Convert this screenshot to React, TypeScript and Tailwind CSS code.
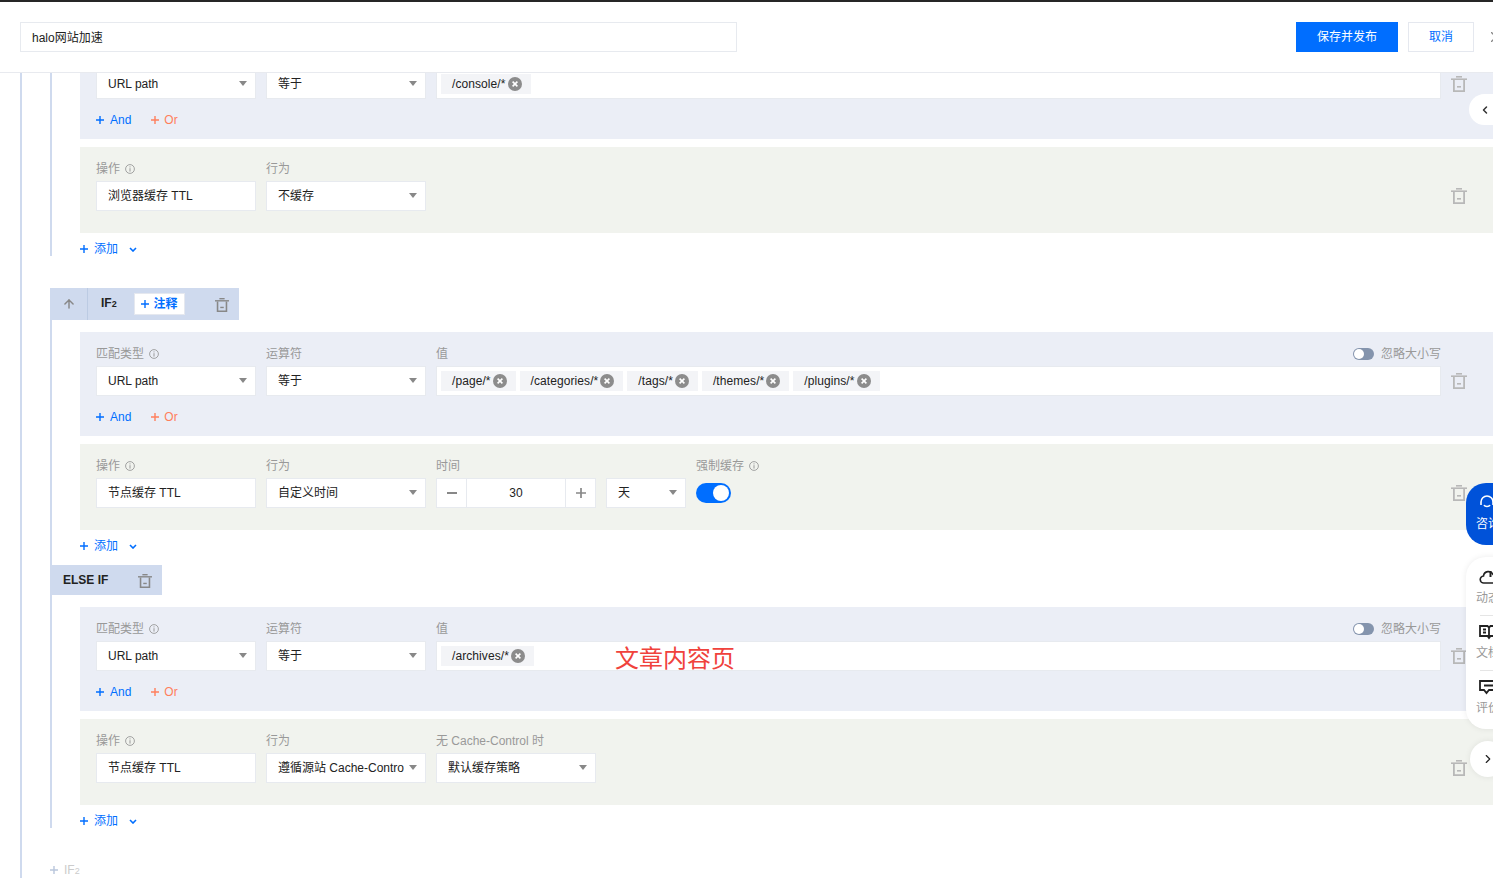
import React from 'react'
import { ArrowUp, ChevronLeft, ChevronRight } from 'lucide-react'

const FONT = { fontFamily: '"Liberation Sans", "Noto Sans CJK SC", sans-serif' }

const TrashIcon = ({ className = 'text-[#b8b8b8]', size = 16 }: { className?: string; size?: number }) => (
  <svg width={size} height={size} viewBox="0 0 16 16" className={className} fill="currentColor">
    <rect x="5" y="0" width="6" height="1.6" />
    <rect x="0" y="2.4" width="16" height="1.6" />
    <path d="M2 4h1.8v10.2h8.4V4H14v12H2z" />
    <rect x="6" y="10" width="4" height="1.6" />
  </svg>
)

const InfoIcon = () => (
  <svg width="10" height="10" viewBox="0 0 10 10" className="ml-[5px] text-[#999]" fill="none" stroke="currentColor">
    <circle cx="5" cy="5" r="4.4" strokeWidth="0.9" />
    <path d="M5 2.4v1M5 4.2v3.4" strokeWidth="1" />
  </svg>
)

const PlusIcon = ({ className = '' }: { className?: string }) => (
  <svg width="8" height="8" viewBox="0 0 8 8" className={className} stroke="currentColor" strokeWidth="1.4">
    <path d="M0 4h8M4 0v8" />
  </svg>
)

const Caret = () => (
  <svg width="8" height="5" viewBox="0 0 8 5" className="absolute right-[8px] top-[11px] text-[#888]" fill="currentColor">
    <path d="M0 0h8L4 5z" />
  </svg>
)

const Box = ({ children, className = '' }: { children?: React.ReactNode; className?: string }) => (
  <div className={`flex h-[30px] items-center border border-[#e7eaef] bg-white text-[12px] text-[#222] ${className}`}>
    {children}
  </div>
)

const Select = ({ text, w = 'w-[160px]' }: { text: string; w?: string }) => (
  <Box className={`relative pl-[11px] pr-[21px] ${w}`}>
    <span className="overflow-hidden whitespace-nowrap">{text}</span>
    <Caret />
  </Box>
)

const Field = ({ label, info, right, children, className = '' }: {
  label?: string
  info?: boolean
  right?: React.ReactNode
  children: React.ReactNode
  className?: string
}) => (
  <div className={className}>
    <div className="mb-[4px] flex h-[18px] items-center pt-[2px] text-[12px] text-[#999]">
      {label}
      {info && <InfoIcon />}
      {right}
    </div>
    {children}
  </div>
)

const Tag = ({ text }: { text: string }) => (
  <span className="flex h-[20px] items-center bg-[#f3f4f7] pl-[11px] pr-[2px] text-[12px] tracking-[0.08px] text-[#222]">
    {text}
    <svg width="14" height="14" viewBox="0 0 14 14" className="ml-[2px] mr-[7px]">
      <circle cx="7" cy="7" r="7" fill="#8c8c8c" />
      <path d="M4.6 4.6l4.8 4.8M9.4 4.6l-4.8 4.8" stroke="#fff" strokeWidth="1.6" />
    </svg>
  </span>
)

const Trash = () => (
  <div className="flex h-[30px] w-[52px] shrink-0 items-center self-end pl-[10px]">
    <TrashIcon />
  </div>
)

const IgnoreCase = () => (
  <div className="ml-auto flex items-center text-[#999]">
    <span className="mr-[7px] flex h-[12px] w-[21px] items-center rounded-full bg-[#8494ad] pl-[1px]">
      <span className="h-[10px] w-[10px] rounded-full bg-white" />
    </span>
    忽略大小写
  </div>
)

const Condition = ({ tags }: { tags: string[] }) => (
  <div className="bg-[#ebeef6] pb-[9px] pl-[16px] pt-[12px]">
    <div className="flex">
      <div className="flex flex-1 gap-[10px]">
        <Field label="匹配类型" info className="w-[160px]"><Select text="URL path" /></Field>
        <Field label="运算符" className="w-[160px]"><Select text="等于" /></Field>
        <Field label="值" right={<IgnoreCase />} className="flex-1">
          <Box className="gap-[4px] pl-[4px]">
            {tags.map(t => <Tag key={t} text={t} />)}
          </Box>
        </Field>
      </div>
      <Trash />
    </div>
    <div className="mt-[11px] flex h-[20px] items-center text-[12px]">
      <PlusIcon className="text-[#006eff]" />
      <span className="ml-[6px] text-[#006eff]">And</span>
      <PlusIcon className="ml-[20px] text-[#ff7f5c]" />
      <span className="ml-[5px] text-[#ff7f5c]">Or</span>
    </div>
  </div>
)

const Action = ({ children }: { children: React.ReactNode }) => (
  <div className="mt-[8px] flex bg-[#f1f3ee] pb-[22px] pl-[16px] pt-[12px]">
    <div className="flex flex-1 gap-[10px]">{children}</div>
    <Trash />
  </div>
)

const AddRow = () => (
  <div className="mt-[8px] flex h-[16px] items-center text-[12px] text-[#006eff]">
    <PlusIcon />
    <span className="ml-[6px]">添加</span>
    <svg width="8" height="5" viewBox="0 0 8 5" className="ml-[11px]" fill="none" stroke="currentColor" strokeWidth="1.6">
      <path d="M1 1l3 3 3-3" />
    </svg>
  </div>
)

const Stepper = () => (
  <Box className="w-[160px]">
    <span className="flex h-full w-[29px] items-center justify-center text-[#888]">
      <svg width="10" height="2" viewBox="0 0 10 2" fill="currentColor"><rect width="10" height="2" /></svg>
    </span>
    <span className="flex h-full flex-1 items-center justify-center border-x border-[#e7eaef]">30</span>
    <span className="flex h-full w-[29px] items-center justify-center text-[#888]">
      <svg width="10" height="10" viewBox="0 0 10 10" stroke="currentColor" strokeWidth="1.7"><path d="M0 5h10M5 0v10" /></svg>
    </span>
  </Box>
)

const SideItem = ({ icon, label, className = 'h-[54px] pt-[9px]' }: { icon: React.ReactNode; label: string; className?: string }) => (
  <div className={`flex flex-col ${className}`}>
    <div className="h-[18px] pl-[13px]">{icon}</div>
    <span className="mt-[2px] pl-[10px] text-[12px] leading-[16px] text-[#999]">{label}</span>
  </div>
)

export default function App() {
  return (
    <div style={FONT} className="relative flex h-[891px] w-[1493px] flex-col overflow-hidden bg-white">
      <div className="h-[2px] bg-[#262626]" />
      <header className="z-10 flex h-[71px] shrink-0 items-center overflow-hidden border-b border-[#e8eaef] bg-white pl-[20px]">
        <div className="flex h-[30px] w-[717px] shrink-0 items-center border border-[#e7eaef] pl-[11px] pt-[2px] text-[12px] text-[#222]">halo网站加速</div>
        <button className="ml-[559px] h-[30px] w-[102px] shrink-0 bg-[#006eff] text-[12px] text-white">保存并发布</button>
        <button className="ml-[10px] h-[30px] w-[66px] shrink-0 border border-[#e5e8ef] text-[12px] text-[#006eff]">取消</button>
        <svg width="10" height="10" viewBox="0 0 10 10" className="ml-[17px] shrink-0 text-[#888]" stroke="currentColor" strokeWidth="1.4">
          <path d="M0 0l10 10M10 0L0 10" />
        </svg>
      </header>

      <main className="flex-1 overflow-hidden pl-[20px]">
        <div className="-mt-[38px] h-[843px] border-l-2 border-[#cfdaee] pl-[28px]">
          <div className="h-[221px] border-l-2 border-[#cfdaee] pl-[28px]">
            <Condition tags={['/console/*']} />
            <Action>
              <Field label="操作" info className="w-[160px]"><Box className="pl-[11px]">浏览器缓存 TTL</Box></Field>
              <Field label="行为" className="w-[160px]"><Select text="不缓存" /></Field>
            </Action>
            <AddRow />
          </div>

          <div className="mt-[32px] flex h-[32px] w-[189px] items-center bg-[#cfdaee]">
            <div className="flex h-full w-[38px] items-center justify-center border-r border-[#bccbe3] text-[#888]">
              <ArrowUp size={14} strokeWidth={2.5} />
            </div>
            <span className="-mt-[2px] ml-[13px] w-[33px] text-[12px] font-bold text-[#222]">IF<span className="text-[9px]">2</span></span>
            <button className="flex h-[22px] w-[51px] items-center justify-center border border-[#e5e8ef] bg-white text-[12px] font-bold text-[#006eff]">
              <PlusIcon className="mr-[4px]" />注释
            </button>
            <span className="ml-[30px] mt-[2px]"><TrashIcon size={14} className="text-[#888]" /></span>
          </div>

          <div className="h-[508px] border-l-2 border-[#cfdaee] pl-[28px] pt-[12px]">
            <Condition tags={['/page/*', '/categories/*', '/tags/*', '/themes/*', '/plugins/*']} />
            <Action>
              <Field label="操作" info className="w-[160px]"><Box className="pl-[11px]">节点缓存 TTL</Box></Field>
              <Field label="行为" className="w-[160px]"><Select text="自定义时间" /></Field>
              <Field label="时间"><Stepper /></Field>
              <Field><Select text="天" w="w-[80px]" /></Field>
              <Field label="强制缓存" info>
                <div className="flex h-[30px] items-center">
                  <span className="flex h-[20px] w-[35px] items-center justify-end rounded-full bg-[#006eff] pr-[2px]">
                    <span className="h-[16px] w-[16px] rounded-full bg-white" />
                  </span>
                </div>
              </Field>
            </Action>
            <AddRow />

            <div className="-ml-[28px] mt-[11px] flex h-[30px] w-[110px] items-center bg-[#cfdaee] pl-[11px] text-[12px] font-bold text-[#222]">
              ELSE IF
              <span className="ml-auto mr-[10px] mt-[2px]"><TrashIcon size={14} className="text-[#888]" /></span>
            </div>

            <div className="mt-[12px]"><Condition tags={['/archives/*']} /></div>
            <Action>
              <Field label="操作" info className="w-[160px]"><Box className="pl-[11px]">节点缓存 TTL</Box></Field>
              <Field label="行为" className="w-[160px]"><Select text="遵循源站 Cache-Control" /></Field>
              <Field label="无 Cache-Control 时" className="w-[160px]"><Select text="默认缓存策略" /></Field>
            </Action>
            <AddRow />
          </div>

          <div className="mt-[34px] flex h-[16px] items-center text-[12px] text-[#ccc]">
            <PlusIcon className="text-[#b9c6dc]" />
            <span className="ml-[6px]">IF<span className="text-[9px]">2</span></span>
          </div>
        </div>
      </main>

      <div className="absolute left-[615px] top-[643px] text-[24px] leading-[32px] text-[#f0423c]">文章内容页</div>

      <div className="absolute left-[1469px] top-[94px] flex h-[31px] w-[40px] items-center rounded-l-full bg-white pl-[10px] text-[#333]">
        <ChevronLeft size={12} strokeWidth={3} />
      </div>

      <div className="absolute left-[1466px] top-[483px] h-[62px] w-[50px] rounded-l-[20px] bg-[#0052d9] pl-[10px] pt-[12px] text-white">
        <svg width="16" height="16" viewBox="0 0 16 16" className="ml-[3px]" fill="none" stroke="currentColor" strokeWidth="1.6">
          <path d="M2 10V7a6 6 0 0 1 12 0v3M5 10c1 2 5 2 6 0" />
        </svg>
        <span className="mt-[5px] block text-[12px] leading-[16px]">咨询</span>
      </div>

      <div className="absolute left-[1466px] top-[557px] h-[172px] w-[50px] rounded-l-[20px] bg-white shadow-[0_0_6px_rgba(0,0,0,0.08)]">
        <SideItem label="动态" className="h-[58px] pt-[13px]" icon={
          <svg width="20" height="18" viewBox="0 0 20 18" fill="none" stroke="#222" strokeWidth="1.6">
            <path d="M5 13a3.5 3.5 0 0 1-.5-7A5 5 0 0 1 14 4.5a4.5 4.5 0 0 1 2 8.5z" />
            <path d="M11.5 1v6" strokeWidth="2" />
          </svg>
        } />
        <div className="ml-[14px] h-px bg-[#e5e5e5]" />
        <SideItem label="文档" icon={
          <svg width="20" height="18" viewBox="0 0 20 18" fill="none" stroke="#222" strokeWidth="1.8">
            <path d="M1 1h7.5L10 2.5 11.5 1H19v10h-7.5L10 13l-1.5-2H1zM10 2.5V13M4 4.5h3M4 7.5h3" />
          </svg>
        } />
        <div className="ml-[14px] h-px bg-[#e5e5e5]" />
        <SideItem label="评价" icon={
          <svg width="20" height="18" viewBox="0 0 20 18" fill="none" stroke="#222" strokeWidth="1.8">
            <path d="M1 1h18v9h-9l-2.5 3L5 10H1zM5 5.5h9" />
          </svg>
        } />
      </div>

      <div className="absolute left-[1470px] top-[741px] flex h-[36px] w-[36px] items-center justify-center rounded-full bg-white text-[#222] shadow-[0_0_6px_rgba(0,0,0,0.08)]">
        <ChevronRight size={14} strokeWidth={2} />
      </div>
    </div>
  )
}
